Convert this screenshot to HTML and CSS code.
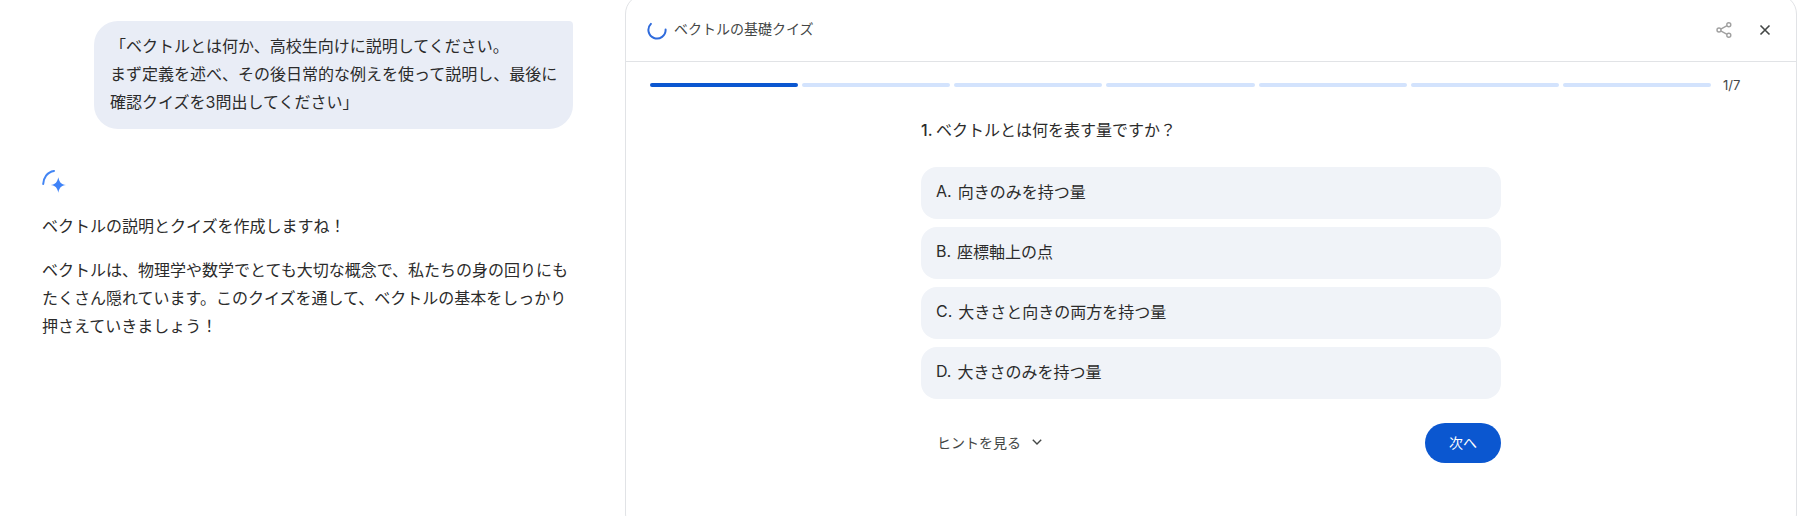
FILE: index.html
```html
<!DOCTYPE html>
<html lang="ja">
<head>
<meta charset="utf-8">
<title>ベクトルの基礎クイズ</title>
<link rel="stylesheet" href="styles.css">
</head>
<body>
<main class="app">
  <section class="chat">
    <div class="bubble">「ベクトルとは何か、高校生向けに説明してください。<br>まず定義を述べ、その後日常的な例えを使って説明し、最後に確認クイズを3問出してください」</div>
    <svg class="spark" width="24" height="24" viewBox="0 0 24 24" aria-hidden="true">
      <path class="spark-arc" d="M1.200 14C1.500 8 5 2 12 1"/>
      <path class="spark-star" d="M16.300 7.300C17.200 11.700 19 14.700 24 15C19 15.300 17.200 18.300 16.300 22.700C15.400 18.300 13.600 15.300 8.600 15C13.600 14.700 15.400 11.700 16.300 7.300Z"/>
    </svg>
    <p class="reply">ベクトルの説明とクイズを作成しますね！</p>
    <p class="reply">ベクトルは、物理学や数学でとても大切な概念で、私たちの身の回りにもたくさん隠れています。このクイズを通して、ベクトルの基本をしっかり押さえていきましょう！</p>
  </section>
  <section class="panel">
    <header class="panel-head">
      <svg class="spinner" width="20" height="20" viewBox="0 0 20 20" aria-hidden="true"><path d="M18.600 9.500A8.600 8.600 0 1 1 3.900 3.900"/></svg>
      <h1 class="panel-title">ベクトルの基礎クイズ</h1>
      <svg class="share" width="18" height="18" viewBox="0 0 18 18" aria-hidden="true">
        <path d="M12.100 4.700L5.700 8.100M5.700 9.900L12.100 13.300"/>
        <circle cx="13.800" cy="3.800" r="2"/><circle cx="4" cy="9" r="2"/><circle cx="13.800" cy="14.200" r="2"/>
      </svg>
      <svg class="close" width="12" height="12" viewBox="0 0 12 12" aria-hidden="true"><path d="M1.500 1.500L10.500 10.500M10.500 1.500L1.500 10.500"/></svg>
    </header>
    <div class="progress">
      <div class="bars">
        <span class="bar bar-on"></span><span class="bar"></span><span class="bar"></span><span class="bar"></span><span class="bar"></span><span class="bar"></span><span class="bar"></span>
      </div>
      <span class="count">1/7</span>
    </div>
    <div class="quiz">
      <p class="question"><span class="qnum">1.</span> ベクトルとは何を表す量ですか？</p>
      <ul class="options">
        <li class="option"><span class="letter">A.</span>向きのみを持つ量</li>
        <li class="option"><span class="letter">B.</span>座標軸上の点</li>
        <li class="option"><span class="letter">C.</span>大きさと向きの両方を持つ量</li>
        <li class="option"><span class="letter">D.</span>大きさのみを持つ量</li>
      </ul>
      <div class="actions">
        <span class="hint">ヒントを見る
          <svg class="chev" width="14" height="14" viewBox="0 0 14 14" aria-hidden="true"><path d="M2.800 4.800L7 9L11.200 4.800"/></svg>
        </span>
        <span class="next">次へ</span>
      </div>
    </div>
  </section>
</main>
</body>
</html>
```
FILE: styles.css
```css
* { box-sizing: border-box; }
html, body { margin: 0; height: 100%; overflow: hidden; background: #fff; }
body { font-family: Inter, "Noto Sans CJK JP", sans-serif; color: #2b2b2b; }

.app { display: flex; height: 516px; }

.chat { width: 625px; flex: none; padding: 21px 0 0 42px; font-size: 16px; line-height: 28px; }
.bubble {
  width: 479px; margin-left: 52px; padding: 11px 8px 13px 16px;
  background: #e9edf6; border-radius: 24px 4px 24px 24px;
}
.spark { display: block; margin-top: 41px; margin-bottom: 18px; }
.spark-arc { fill: none; stroke: #4285f4; stroke-width: 2; stroke-linecap: round; }
.spark-star { fill: #3f83f8; }
.reply { margin: 0 0 16px; width: 530px; }

.panel {
  width: 1172px; flex: none; height: 540px; margin-top: -6px;
  border: 1px solid #e1e3e6; border-radius: 20px;
}
.panel-head {
  display: flex; align-items: center; height: 67px; padding: 4px 25px 0 21px;
  border-bottom: 1px solid #e1e3e6;
}
.spinner { fill: none; stroke: #2f6bdc; stroke-width: 2; stroke-linecap: round; margin-right: 7px; }
.panel-title { margin: 0 0 2px; font-size: 14px; font-weight: 400; line-height: 20px; color: #444746; }
.share { margin-left: auto; fill: none; stroke: #a0a0a0; stroke-width: 1.400; margin-right: 26px; }
.close { fill: none; stroke: #444746; stroke-width: 1.600; }

.progress { display: flex; align-items: center; padding: 21px 0 0 24px; }
.bars { display: flex; gap: 4px; width: 1061px; }
.bar { flex: 1; height: 4px; border-radius: 2px; background: #d3e3fd; }
.bar-on { background: #0b57d0; }
.count { margin-left: 12px; font-size: 13px; line-height: 4px; color: #444746; }

.quiz { width: 580px; margin: 33px 0 0 295px; }
.question { margin: 0 0 27px; font-size: 16px; line-height: 20px; word-spacing: -1px; }
.qnum { font-weight: 450; }
.options { list-style: none; margin: 0; padding: 0; display: flex; flex-direction: column; gap: 8px; }
.option {
  display: flex; align-items: center; height: 52px; padding: 0 15px 5px;
  background: #f0f3f8; border-radius: 16px; font-size: 16px;
}
.letter { margin-right: 6px; }
.actions { display: flex; align-items: center; justify-content: space-between; margin-top: 24px; height: 40px; }
.hint { display: flex; align-items: center; gap: 9px; padding: 0 0 2px 16px; font-size: 14px; color: #444746; }
.chev { fill: none; stroke: #444746; stroke-width: 1.400; }
.next {
  display: flex; align-items: center; justify-content: center; width: 76px; height: 40px; padding-bottom: 3px;
  background: #0b57d0; color: #fff; border-radius: 20px; font-size: 14px;
}
```
